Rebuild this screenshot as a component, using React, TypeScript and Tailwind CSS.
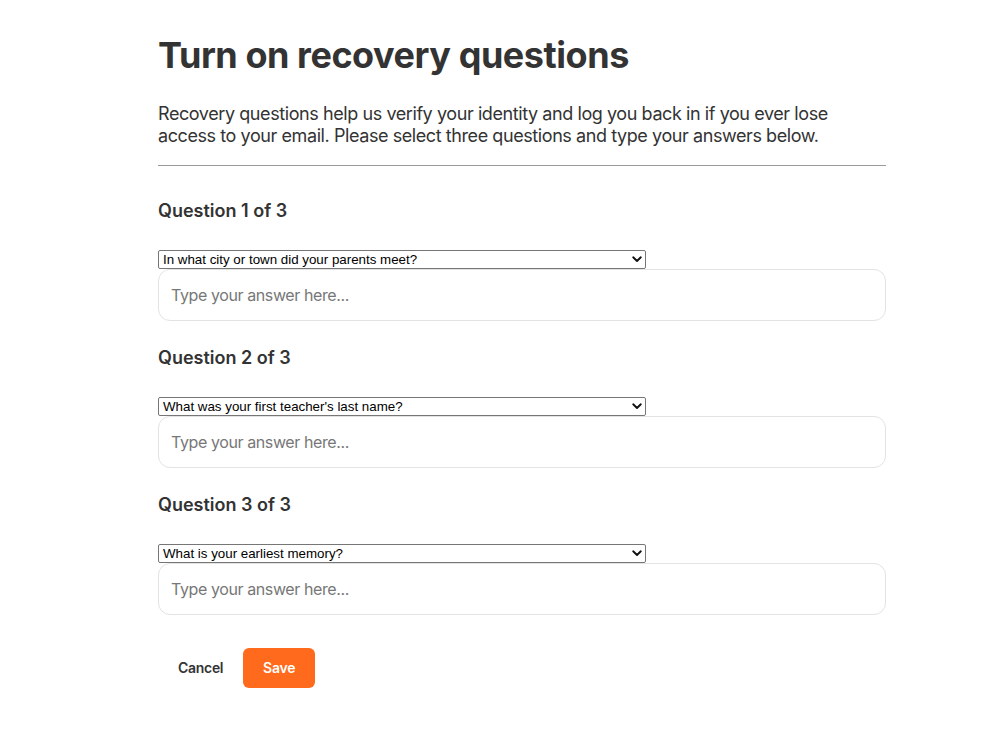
import React from "react";

const questions = [
  "In what city or town did your parents meet?",
  "What was your first teacher's last name?",
  "What is your earliest memory?",
];

function Chevron() {
  return (
    <svg width="10" height="7" viewBox="0 0 10 7" className="pointer-events-none absolute right-[4px] top-[6px]">
      <path d="M1.2 1.3 L5 5 L8.8 1.3" fill="none" stroke="#111" strokeWidth="1.9" strokeLinecap="round" strokeLinejoin="round" />
    </svg>
  );
}

export default function App() {
  return (
    <div className="min-h-[738px] bg-white text-[#333333]" style={{ fontFamily: "Inter, 'Noto Sans', sans-serif" }}>
      <div className="ml-[158px] w-[728px] pt-[33px]">
        <h1 className="text-[36px] font-bold leading-[44px] tracking-[-0.45px] text-[#333333]">Turn on recovery questions</h1>
        <p className="mt-[26px] text-[18px] leading-[22px] tracking-[-0.42px] text-[#333333]">
          Recovery questions help us verify your identity and log you back in if you ever lose access to your email. Please select three questions and type your answers below.
        </p>
        <div className="mt-[18px] h-px bg-[#9a9a9a]" />
        <div className="mt-[34px] flex flex-col gap-[26px]">
          {questions.map((q, i) => (
            <div key={i} className="flex flex-col">
              <h2 className="text-[18px] font-semibold leading-[22px] text-[#333333]">Question {i + 1} of 3</h2>
              <div className="relative mt-[28px] w-[488px]">
                <select
                  defaultValue={q}
                  className="block h-[19px] w-full appearance-none rounded-[2px] border border-[#767676] bg-white pl-[4px] text-[13.333px] leading-[17px] text-black"
                  style={{ fontFamily: "'Liberation Sans', Arial, sans-serif" }}
                >
                  {questions.map((o) => (
                    <option key={o} value={o}>{o}</option>
                  ))}
                </select>
                <Chevron />
              </div>
              <input
                type="text"
                placeholder="Type your answer here..."
                className="block h-[52px] w-full rounded-[12px] border border-[#e3e3e3] bg-white px-[12px] text-[16px] tracking-[-0.4px] text-[#333333] placeholder:text-[#777777] outline-none"
              />
            </div>
          ))}
        </div>
        <div className="mt-[32px] flex items-center">
          <button className="px-[20px] py-[10px] text-[14px] font-semibold tracking-[-0.3px] text-[#333333]">Cancel</button>
          <button className="h-[40px] w-[72px] rounded-[6px] bg-[#ff6a1c] text-[14px] font-semibold tracking-[-0.2px] text-white">Save</button>
        </div>
      </div>
    </div>
  );
}
